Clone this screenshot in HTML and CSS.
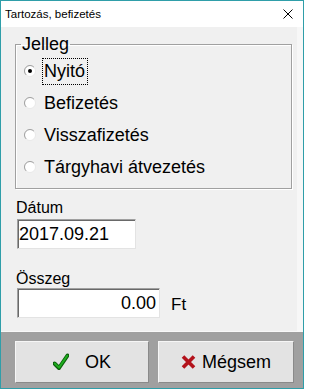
FILE: index.html
```
<!DOCTYPE html>
<html lang="hu">
<head>
<meta charset="utf-8">
<title>Tartozás, befizetés</title>
<link rel="stylesheet" href="styles.css">
</head>
<body>
<div class="window">
  <div class="titlebar">
    <span class="title">Tartozás, befizetés</span>
    <svg class="close" width="10" height="10" viewBox="0 0 10 10"><path d="M0.5 0.5L9.5 9.5M9.5 0.5L0.5 9.5" stroke="#000" stroke-width="1" fill="none"/></svg>
  </div>
  <div class="client">
    <fieldset class="group">
      <legend class="legend">Jelleg</legend>
      <div class="row">
        <svg class="radio" width="12" height="12" viewBox="0 0 12 12"><circle cx="6" cy="6" r="5.5" fill="#fff" stroke="#e8e8e8"/><path d="M2.1 9.9A5.5 5.5 0 0 1 9.9 2.1" stroke="#a0a0a0" fill="none"/><circle cx="6" cy="6" r="2" fill="#000"/></svg>
        <span class="label focus">Nyitó</span>
      </div>
      <div class="row">
        <svg class="radio" width="12" height="12" viewBox="0 0 12 12"><circle cx="6" cy="6" r="5.5" fill="#fff" stroke="#e8e8e8"/><path d="M2.1 9.9A5.5 5.5 0 0 1 9.9 2.1" stroke="#a0a0a0" fill="none"/></svg>
        <span class="label">Befizetés</span>
      </div>
      <div class="row">
        <svg class="radio" width="12" height="12" viewBox="0 0 12 12"><circle cx="6" cy="6" r="5.5" fill="#fff" stroke="#e8e8e8"/><path d="M2.1 9.9A5.5 5.5 0 0 1 9.9 2.1" stroke="#a0a0a0" fill="none"/></svg>
        <span class="label">Visszafizetés</span>
      </div>
      <div class="row">
        <svg class="radio" width="12" height="12" viewBox="0 0 12 12"><circle cx="6" cy="6" r="5.5" fill="#fff" stroke="#e8e8e8"/><path d="M2.1 9.9A5.5 5.5 0 0 1 9.9 2.1" stroke="#a0a0a0" fill="none"/></svg>
        <span class="label">Tárgyhavi átvezetés</span>
      </div>
    </fieldset>
    <div class="field-label date-label">Dátum</div>
    <input class="edit date" type="text" value="2017.09.21" readonly>
    <div class="field-label sum-label">Összeg</div>
    <div class="sum-row">
      <input class="edit amount" type="text" value="0.00" readonly>
      <span class="unit">Ft</span>
    </div>
  </div>
  <div class="buttonbar">
    <button class="btn ok" type="button">
      <svg class="icon" width="16" height="18" viewBox="0 0 16 18"><path d="M1.5 10.5L6 15L14.5 2.5" stroke="#0b5e0b" stroke-width="4" fill="none" stroke-linejoin="round" stroke-linecap="round"/><path d="M1.8 10.5L6 14.6L14.2 2.8" stroke="#1fae1f" stroke-width="2" fill="none" stroke-linejoin="round" stroke-linecap="round"/></svg>
      <span class="btn-text ok-text">OK</span>
    </button>
    <button class="btn cancel" type="button">
      <svg class="icon" width="15" height="14" viewBox="0 0 15 14"><path d="M2 1.5L13 12.5M13 1.5L2 12.5" stroke="#b3121b" stroke-width="3.6" fill="none" stroke-linecap="butt"/></svg>
      <span class="btn-text cancel-text">Mégsem</span>
    </button>
  </div>
</div>
</body>
</html>
```
FILE: styles.css
```
html, body {
  margin: 0;
  padding: 0;
  background: #ffffff;
}

.window {
  width: 304px;
  height: 389px;
  box-sizing: border-box;
  border: 1px solid #2f9ea9;
  display: flex;
  flex-direction: column;
  font-family: "Liberation Sans", Arial, sans-serif;
  color: #000;
}

.titlebar {
  height: 26px;
  flex: none;
  background: #ffffff;
  display: flex;
  align-items: center;
  padding-left: 4px;
}

.title {
  font-size: 11.5px;
  flex: 1;
  line-height: 14px;
}

.close {
  margin-right: 10px;
  display: block;
}

.client {
  flex: 1;
  background: #f0f0f0;
  border-right: 6px solid #f7f7f7;
  padding: 7px 0 0 14px;
  display: flex;
  flex-direction: column;
  align-items: flex-start;
}

.group {
  width: 277px;
  box-sizing: border-box;
  margin: 0;
  padding: 1px 0 5px 5px;
  border: 1px solid #a0a0a0;
  box-shadow: 1px 1px 0 #ffffff, inset 1px 1px 0 #ffffff;
  min-inline-size: 0;
}

.legend {
  font-size: 18px;
  line-height: 20px;
  padding: 0 1px;
}

.row {
  height: 32px;
  display: flex;
  align-items: center;
}

.radio {
  display: block;
  margin-left: 3px;
  margin-right: 6px;
  flex: none;
}

.label {
  font-size: 18px;
  line-height: 25px;
  border: 1px dotted transparent;
  padding: 0 2px 0 1px;
}

.label.focus {
  border-color: #000;
}

.field-label {
  font-size: 16px;
  line-height: 18px;
  padding-left: 1px;
}

.date-label {
  margin-top: 10px;
}

.sum-label {
  margin-top: 21px;
}

.edit {
  display: block;
  box-sizing: border-box;
  height: 30px;
  margin: 0;
  font-family: "Liberation Sans", Arial, sans-serif;
  font-size: 18px;
  color: #000;
  background: #ffffff;
  border: 1px solid;
  border-color: #a0a0a0 #e3e3e3 #e3e3e3 #a0a0a0;
  box-shadow: inset 1px 1px 0 #696969;
  outline: none;
}

.date {
  width: 119px;
  margin-top: 2px;
  margin-left: 2px;
  padding: 0 0 0 1px;
}

.sum-row {
  display: flex;
  align-items: flex-end;
  margin-left: 2px;
}

.amount {
  width: 143px;
  text-align: right;
  padding: 0 3px 0 0;
}

.unit {
  font-size: 17px;
  line-height: 20px;
  margin-left: 11px;
  padding-bottom: 3px;
}

.buttonbar {
  height: 57px;
  flex: none;
  box-sizing: border-box;
  background: #a0a0a0;
  border-top: 1px solid #f8f8f8;
  padding: 9px 0 0 14px;
  display: flex;
  gap: 9px;
}

.btn {
  height: 42px;
  margin: 0;
  padding: 0;
  box-sizing: border-box;
  background: #e3e3e3;
  border: 1px solid;
  border-color: #f6f6f6 #8a8a8a #8a8a8a #f6f6f6;
  display: flex;
  align-items: center;
  justify-content: center;
  font-family: "Liberation Sans", Arial, sans-serif;
  font-size: 18px;
  color: #000;
}

.ok {
  width: 134px;
}

.cancel {
  width: 136px;
}

.icon {
  display: block;
  flex: none;
}

.btn-text {
  line-height: 20px;
}

.ok-text {
  margin-left: 16px;
}

.cancel-text {
  margin-left: 6px;
}
```
